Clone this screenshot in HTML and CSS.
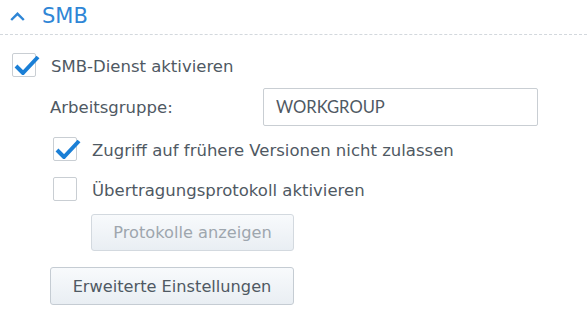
FILE: index.html
```html
<!DOCTYPE html>
<html lang="de">
<head>
    <meta charset="UTF-8">
    <title>SMB</title>
    <link rel="stylesheet" href="styles.css">
</head>
<body>
<div id="panel">
    <div class="head">
        <svg class="chevron" width="15" height="9" viewBox="0 0 15 9">
            <path d="M1.2 8 L7.5 1.8 L13.8 8" fill="none" stroke="#2f86d6" stroke-width="2.4"/>
        </svg>
        <span>SMB</span>
    </div>

    <div class="body">
        <label class="check first">
            <span class="box on"><svg width="28" height="22" viewBox="0 0 28 22"><path d="M3 12 L10 19 L25 3" fill="none" stroke="#1a7fd6" stroke-width="4" stroke-linejoin="round"/></svg></span>
            <span class="txt">SMB-Dienst aktivieren</span>
        </label>

        <div class="field">
            <span class="lbl">Arbeitsgruppe:</span>
            <input type="text" value="WORKGROUP">
        </div>

        <div class="sub">
            <label class="check">
                <span class="box on"><svg width="28" height="22" viewBox="0 0 28 22"><path d="M3 12 L10 19 L25 3" fill="none" stroke="#1a7fd6" stroke-width="4" stroke-linejoin="round"/></svg></span>
                <span class="txt">Zugriff auf frühere Versionen nicht zulassen</span>
            </label>
            <label class="check last">
                <span class="box"></span>
                <span class="txt">Übertragungsprotokoll aktivieren</span>
            </label>
            <button class="btn proto" disabled>Protokolle anzeigen</button>
        </div>

        <button class="btn more">Erweiterte Einstellungen</button>
    </div>
</div>
</body>
</html>
```

FILE: styles.css
```css
* {
    margin: 0;
    padding: 0;
    box-sizing: border-box;
}

body {
    background: #fff;
    font-family: "DejaVu Sans", Verdana, sans-serif;
    font-size: 16.5px;
    color: #4f5963;
}

#panel .head {
    height: 35px;
    display: flex;
    align-items: center;
    padding-left: 10px;
    border-bottom: 1px dashed #d3d8dd;
}

#panel .head span {
    font-size: 21px;
    color: #2f86d6;
    margin-left: 17px;
    margin-top: -3px;
}

#panel .chevron {
    margin-top: -2px;
}

#panel .body {
    padding: 18px 0 0 12px;
}

.check {
    display: flex;
    align-items: center;
    height: 24px;
}

.check .box {
    width: 24px;
    height: 24px;
    border: 1px solid #c9ced3;
    border-radius: 2px;
    background: #fff;
    position: relative;
}

.check .box svg {
    position: absolute;
    left: 0;
    top: 0;
}

.check .txt {
    margin-left: 15px;
    margin-top: 3px;
}

.field {
    display: flex;
    align-items: center;
    margin: 11px 0 0 38px;
}

.field .lbl {
    width: 213px;
}

.field input {
    width: 275px;
    height: 38px;
    border: 1px solid #c9ced3;
    border-radius: 2px;
    padding-left: 12px;
    font-family: Lato, sans-serif;
    font-size: 16.6px;
    color: #4f5963;
    outline: none;
}

.sub {
    margin: 11px 0 0 41px;
}

.sub .check {
    margin-bottom: 16px;
}

.sub .check.last {
    margin-bottom: 13px;
}

.btn {
    display: block;
    height: 37px;
    border: 1px solid #c5ccd3;
    border-radius: 3px;
    background: linear-gradient(#f8fafc, #e9eef3);
    font-family: "DejaVu Sans", Verdana, sans-serif;
    font-size: 16.2px;
    color: #4f5963;
}

.btn.proto {
    width: 203px;
    margin-left: 38px;
    color: #9ea6ae;
    border-color: #d3d9df;
}

.btn.more {
    width: 244px;
    height: 38px;
    margin: 16px 0 0 38px;
}
```
